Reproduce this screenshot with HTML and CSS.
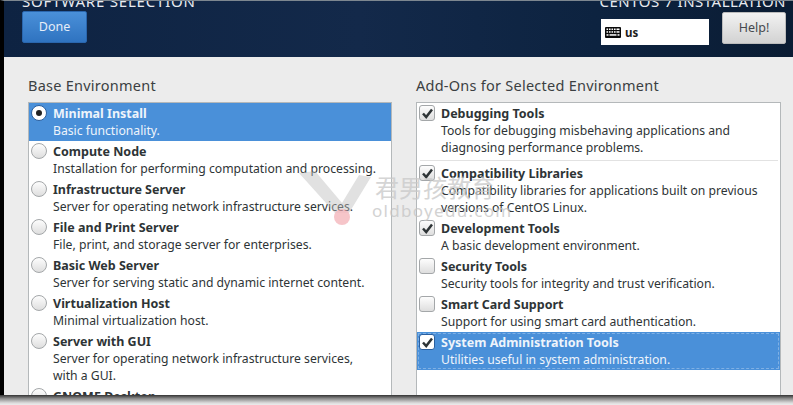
FILE: index.html
```html
<!DOCTYPE html>
<html lang="en">
<head>
<meta charset="utf-8">
<title>Software Selection</title>
<link rel="stylesheet" href="styles.css">
</head>
<body>
<div class="screen">
  <header class="topbar">
    <div class="top-left">
      <div class="title title-left">SOFTWARE SELECTION</div>
      <button class="btn btn-done">Done</button>
    </div>
    <div class="top-right">
      <div class="title title-right">CENTOS 7 INSTALLATION</div>
      <div class="top-controls">
        <div class="kbd">
          <svg class="kbd-icon" viewBox="0 0 16 11" width="16" height="11"><rect width="16" height="11" rx="1" fill="#0a0a0a"/><g fill="#fff"><rect x="1.5" y="1.5" width="1.6" height="1.5"/><rect x="4" y="1.5" width="1.6" height="1.5"/><rect x="6.5" y="1.5" width="1.6" height="1.5"/><rect x="9" y="1.5" width="1.6" height="1.5"/><rect x="11.5" y="1.5" width="3" height="1.5"/><rect x="1.5" y="4.2" width="1.6" height="1.5"/><rect x="4" y="4.2" width="1.6" height="1.5"/><rect x="6.5" y="4.2" width="1.6" height="1.5"/><rect x="9" y="4.2" width="1.6" height="1.5"/><rect x="11.5" y="4.2" width="3" height="1.5"/><rect x="1.5" y="7.2" width="2" height="1.5"/><rect x="4.5" y="7.2" width="7" height="1.5"/><rect x="12.5" y="7.2" width="2" height="1.5"/></g></svg>
          <span>us</span>
        </div>
        <button class="btn btn-help">Help!</button>
      </div>
    </div>
  </header>
  <main class="content">
    <section class="column">
      <h2 class="heading">Base Environment</h2>
      <div class="list">
        <div class="row selected"><span class="radio on"></span><div class="text"><b>Minimal Install</b><p>Basic functionality.</p></div></div>
        <div class="row"><span class="radio"></span><div class="text"><b>Compute Node</b><p>Installation for performing computation and processing.</p></div></div>
        <div class="row"><span class="radio"></span><div class="text"><b>Infrastructure Server</b><p>Server for operating network infrastructure services.</p></div></div>
        <div class="row"><span class="radio"></span><div class="text"><b>File and Print Server</b><p>File, print, and storage server for enterprises.</p></div></div>
        <div class="row"><span class="radio"></span><div class="text"><b>Basic Web Server</b><p>Server for serving static and dynamic internet content.</p></div></div>
        <div class="row"><span class="radio"></span><div class="text"><b>Virtualization Host</b><p>Minimal virtualization host.</p></div></div>
        <div class="row tall"><span class="radio"></span><div class="text"><b>Server with GUI</b><p>Server for operating network infrastructure services,<br>with a GUI.</p></div></div>
        <div class="row"><span class="radio"></span><div class="text"><b>GNOME Desktop</b></div></div>
      </div>
    </section>
    <section class="column">
      <h2 class="heading">Add-Ons for Selected Environment</h2>
      <div class="list">
        <div class="row addon divided"><span class="check"><svg viewBox="0 0 15 15" width="15" height="15"><path d="M3 7.5 6.2 11 12 3.6" class="tick"/></svg></span><div class="text"><b>Debugging Tools</b><p>Tools for debugging misbehaving applications and<br>diagnosing performance problems.</p></div></div>
        <div class="row addon"><span class="check"><svg viewBox="0 0 15 15" width="15" height="15"><path d="M3 7.5 6.2 11 12 3.6" class="tick"/></svg></span><div class="text"><b>Compatibility Libraries</b><p>Compatibility libraries for applications built on previous<br>versions of CentOS Linux.</p></div></div>
        <div class="row addon"><span class="check"><svg viewBox="0 0 15 15" width="15" height="15"><path d="M3 7.5 6.2 11 12 3.6" class="tick"/></svg></span><div class="text"><b>Development Tools</b><p>A basic development environment.</p></div></div>
        <div class="row addon"><span class="check"></span><div class="text"><b>Security Tools</b><p>Security tools for integrity and trust verification.</p></div></div>
        <div class="row addon"><span class="check"></span><div class="text"><b>Smart Card Support</b><p>Support for using smart card authentication.</p></div></div>
        <div class="row addon selected focused"><span class="check"><svg viewBox="0 0 15 15" width="15" height="15"><path d="M3 7.5 6.2 11 12 3.6" class="tick"/></svg></span><div class="text"><b>System Administration Tools</b><p>Utilities useful in system administration.</p></div></div>
      </div>
    </section>
  </main>
  <div class="watermark">
    <svg class="wm-logo" viewBox="0 0 72 56" width="72" height="56"><path d="M0 2 16 0 43 32 60 4 72 6 50 42H36Z" fill="#bdbdbd" opacity=".6"/><circle cx="43" cy="46" r="8" fill="#f2a4ac" opacity=".85"/></svg>
    <div class="wm-text"><div class="wm-cn">君男孩教育</div><div class="wm-en">oldboyedu.com</div></div>
  </div>
</div>
</body>
</html>
```
FILE: styles.css
```css
* { box-sizing: border-box; }
html, body { margin: 0; padding: 0; }
body {
  width: 793px;
  height: 405px;
  overflow: hidden;
  background: #e4e4e4;
  font-family: "Noto Sans", "Open Sans", sans-serif;
}
.screen {
  position: relative;
  height: 395px;
  background: #ececec;
  border-left: 4px solid #000;
  border-top: 1px solid #7d8790;
  overflow: hidden;
}
body::after {
  content: "";
  display: block;
  height: 10px;
  background: linear-gradient(#333 0, #8a8a8a 35%, #dcdcdc 80%, #ececec 100%);
}
.topbar {
  height: 56px;
  background: linear-gradient(90deg, #0e2342 0%, #13294a 45%, #0d2340 75%, #0a1c33 100%);
  display: flex;
  justify-content: space-between;
  padding: 0 7px 0 18px;
  color: #fff;
}
.title {
  font-size: 15px;
  line-height: 16px;
  height: 10px;
  margin-top: -2px;
  padding-top: 1px;
  margin-bottom: 1px;
  display: flex;
  align-items: flex-end;
  overflow: hidden;
  color: #e8ebf0;
}
.title-left { letter-spacing: .8px; }
.title-right { letter-spacing: .5px; }
.top-right { display: flex; flex-direction: column; align-items: flex-end; }
.top-controls { display: flex; gap: 13px; align-items: flex-start; margin-top: 2px; }
.btn {
  font: inherit;
  font-size: 12.5px;
  border-radius: 2px;
  height: 32px;
  padding: 0 0 2px;
  display: block;
  cursor: pointer;
}
.btn-done {
  width: 65px;
  margin-top: 2px;
  color: #e6eef8;
  background: linear-gradient(#4a90d9, #2f73c0);
  border: 1px solid #2a66ad;
}
.btn-help {
  width: 64px;
  color: #45494e;
  background: linear-gradient(#f2f2f2, #d2d2d2);
  border: 1px solid #bcbcbc;
}
.kbd {
  width: 108px;
  height: 26px;
  margin-top: 7px;
  background: #fff;
  display: flex;
  align-items: center;
  gap: 4px;
  padding-left: 4px;
  color: #1c1c1c;
  font-size: 11.5px;
  font-weight: 700;
}
.content {
  display: grid;
  grid-template-columns: 364px 365px;
  column-gap: 24px;
  padding-left: 24px;
}
.heading {
  margin: 19px 0 7px;
  font-size: 14.5px;
  line-height: 19px;
  font-weight: 400;
  letter-spacing: .25px;
  color: #3b3f42;
}
.list {
  height: 300px;
  background: #fff;
  border: 1px solid #b4b8ba;
  overflow: hidden;
}
.row {
  display: flex;
  align-items: flex-start;
  height: 38px;
  color: #2e3436;
}
.row.tall { height: 55px; }
.row.addon { height: auto; padding-bottom: 2px; }
.row.divided { position: relative; padding-bottom: 7px; }
.row.divided::after {
  content: "";
  position: absolute;
  left: 3px;
  right: 2px;
  bottom: 2px;
  border-bottom: 1px solid #e2e2e2;
}
.text { font-size: 12.2px; line-height: 17px; }
.text b { display: block; font-size: 12.5px; font-weight: 700; line-height: 17px; padding-top: 2px; }
.text p { margin: 0; }
.radio {
  flex: none;
  width: 16px;
  height: 16px;
  margin: 2px 6px 0 2px;
  border-radius: 50%;
  border: 1px solid #a4a7a9;
  background: linear-gradient(#fdfdfd, #dedede);
  position: relative;
}
.radio.on { background: #fff; border-color: #2a5f9f; }
.radio.on::after {
  content: "";
  position: absolute;
  left: 4px;
  top: 4px;
  width: 6px;
  height: 6px;
  border-radius: 50%;
  background: #222;
}
.check {
  flex: none;
  width: 16px;
  height: 16px;
  margin: 2px 6px 0 2px;
  border-radius: 3px;
  border: 1px solid #a4a7a9;
  background: linear-gradient(#fdfdfd, #dedede);
  display: block;
}
.check svg { display: block; }
.tick { fill: none; stroke: #2e3436; stroke-width: 2.5; }
.selected { background: #4a90d9; color: #eef4fb; }
.selected .check { background: #fff; border-color: #2a5f9f; }
.focused { outline: 1px dashed #7fb0e4; outline-offset: -2px; }
.watermark {
  position: absolute;
  left: 295px;
  top: 170px;
  display: flex;
  pointer-events: none;
  opacity: .75;
}
.wm-logo { display: block; }
.wm-text { margin-left: 4px; }
.wm-cn { font-family: "Noto Sans CJK SC", sans-serif; font-size: 24px; line-height: 30px; margin-top: 1px; white-space: nowrap; color: #c8c8c8; }
.wm-en { font-size: 17px; line-height: 18px; letter-spacing: 1.3px; margin-left: -3px; color: #c4c4c4; }
```
